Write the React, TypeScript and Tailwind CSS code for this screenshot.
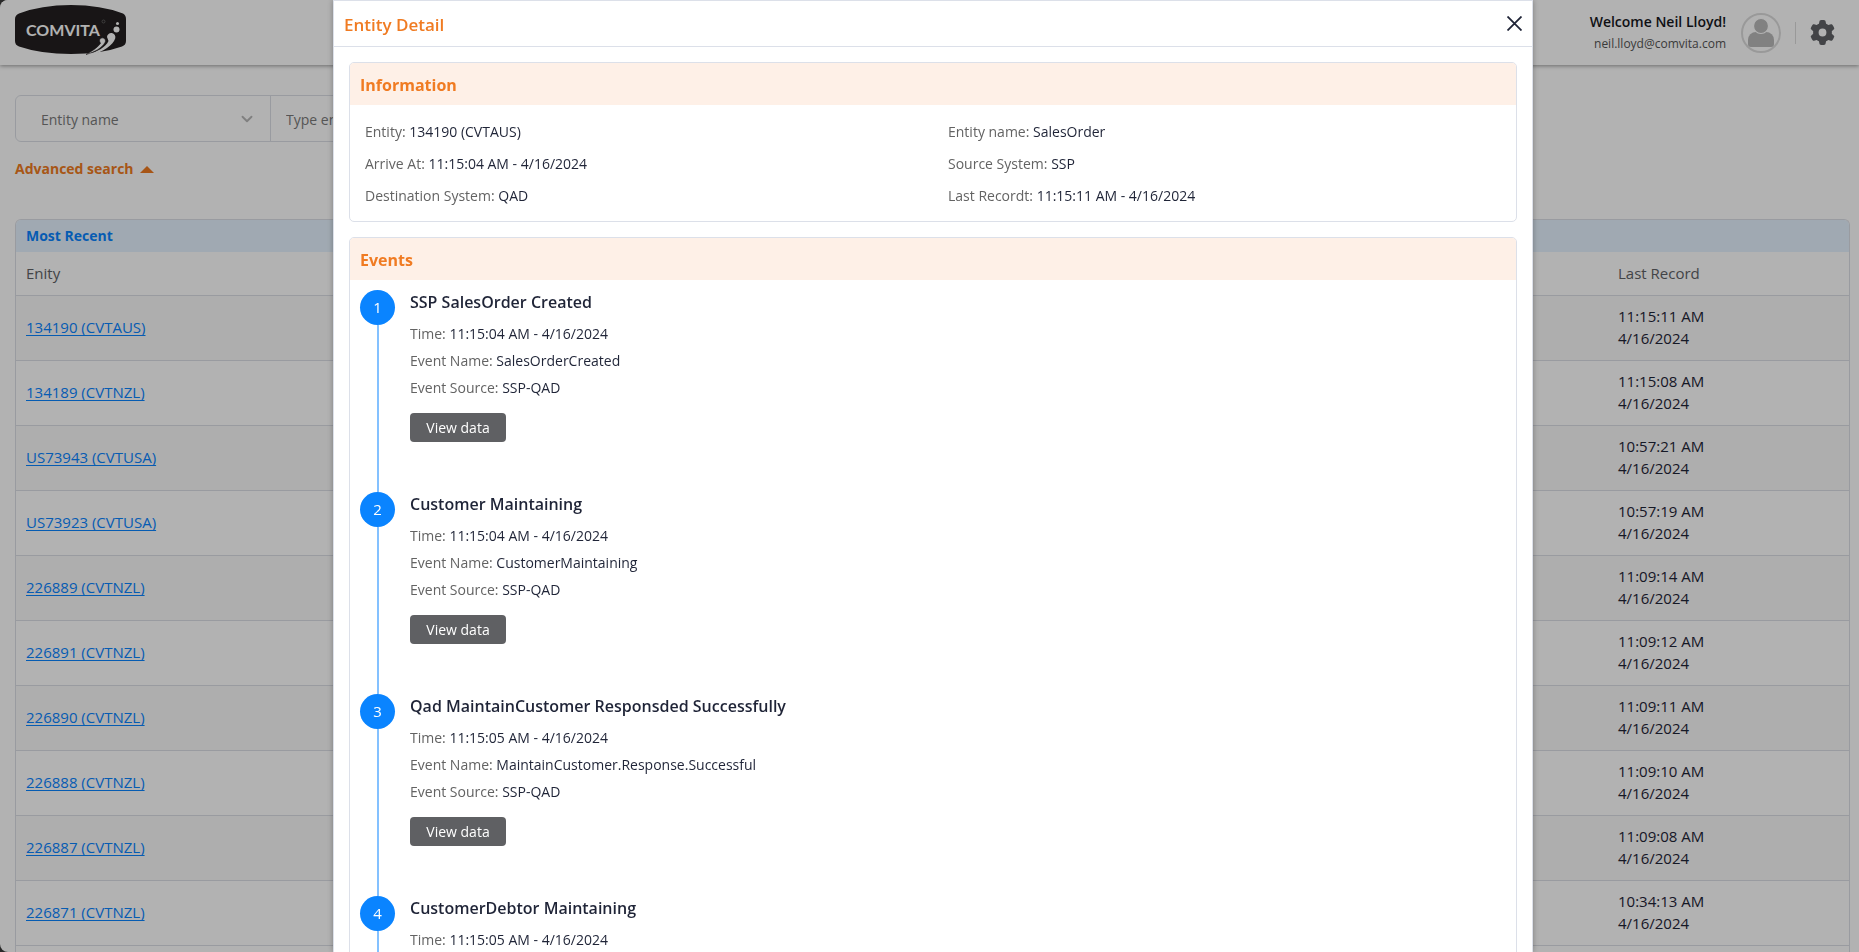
import type { ReactNode } from "react";
import { ChevronDown } from "lucide-react";
import { FaGear } from "react-icons/fa6";

const records = [
  { entity: "134190 (CVTAUS)", time: "11:15:11 AM" },
  { entity: "134189 (CVTNZL)", time: "11:15:08 AM" },
  { entity: "US73943 (CVTUSA)", time: "10:57:21 AM" },
  { entity: "US73923 (CVTUSA)", time: "10:57:19 AM" },
  { entity: "226889 (CVTNZL)", time: "11:09:14 AM" },
  { entity: "226891 (CVTNZL)", time: "11:09:12 AM" },
  { entity: "226890 (CVTNZL)", time: "11:09:11 AM" },
  { entity: "226888 (CVTNZL)", time: "11:09:10 AM" },
  { entity: "226887 (CVTNZL)", time: "11:09:08 AM" },
  { entity: "226871 (CVTNZL)", time: "10:34:13 AM" },
];

const information = [
  { label: "Entity", value: "134190 (CVTAUS)" },
  { label: "Entity name", value: "SalesOrder" },
  { label: "Arrive At", value: "11:15:04 AM - 4/16/2024" },
  { label: "Source System", value: "SSP" },
  { label: "Destination System", value: "QAD" },
  { label: "Last Recordt", value: "11:15:11 AM - 4/16/2024" },
];

const events = [
  {
    title: "SSP SalesOrder Created",
    time: "11:15:04 AM - 4/16/2024",
    name: "SalesOrderCreated",
    source: "SSP-QAD",
  },
  {
    title: "Customer Maintaining",
    time: "11:15:04 AM - 4/16/2024",
    name: "CustomerMaintaining",
    source: "SSP-QAD",
  },
  {
    title: "Qad MaintainCustomer Responsded Successfully",
    time: "11:15:05 AM - 4/16/2024",
    name: "MaintainCustomer.Response.Successful",
    source: "SSP-QAD",
  },
  {
    title: "CustomerDebtor Maintaining",
    time: "11:15:05 AM - 4/16/2024",
    name: "CustomerDebtorMaintaining",
    source: "SSP-QAD",
  },
];

function Logo() {
  return (
    <svg viewBox="0 0 112 50" className="h-[50px] w-[112px]" role="img" aria-label="Comvita">
      <path
        d="M0 14Q0 10 4 8.500Q26 0 56 0T108 8.500Q111 10 111 14V36Q111 40 107 41.500Q86 49 56 49T4 41.500Q0 40 0 36Z"
        fill="#231f20"
      />
      <text
        x="11"
        y="31"
        fill="#fff"
        fontFamily="Lato, sans-serif"
        fontSize="16"
        fontWeight="700"
      >
        COMVITA
      </text>
      <circle cx="88.500" cy="16.500" r="1.500" fill="none" stroke="#777" strokeWidth="0.600" />
      <circle cx="102.500" cy="18.500" r="1.500" fill="#fff" />
      <circle cx="101.500" cy="24.500" r="3" fill="#fff" />
      <path
        d="M92 32a4.200 4.200 0 1 1 8.200 1.500C98 40 88 47 78 49.500L71 50C82 47 91 42 93.500 36Z"
        fill="#fff"
      />
      <path
        d="M84.500 36a3 3 0 1 1 5.500 1.500C87 43 80 47 71 49.500C77 46 82 43 85.500 38.500Z"
        fill="#fff"
        stroke="#231f20"
        strokeWidth="0.600"
      />
    </svg>
  );
}

function Avatar() {
  return (
    <svg viewBox="0 0 40 40" className="size-10" aria-hidden="true">
      <circle cx="20" cy="20" r="19" fill="none" stroke="#dcdcdc" strokeWidth="2" />
      <path d="M7 31v-4a8 8 0 0 1 8-8h10a8 8 0 0 1 8 8v4a3 3 0 0 1-3 3H10a3 3 0 0 1-3-3Z" fill="#b9b9b9" />
      <circle cx="20" cy="13" r="7.500" fill="#b9b9b9" stroke="#fff" strokeWidth="1.200" />
    </svg>
  );
}

function Header() {
  return (
    <header className="flex h-[65px] shrink-0 items-center justify-between bg-white pr-6 pl-[15px] shadow-[0_1px_4px_rgba(0,0,0,0.4)]">
      <a href="#" className="mb-[6px]">
        <Logo />
      </a>
      <div className="flex items-center">
        <div className="text-right">
          <p className="text-sm leading-[22px] font-semibold text-[#16181d]">Welcome Neil Lloyd!</p>
          <p className="text-xs leading-[22px] text-[#555]">neil.lloyd@comvita.com</p>
        </div>
        <span className="ml-[15px]">
          <Avatar />
        </span>
        <span className="mx-[14px] h-[22px] w-px bg-[#dcdcdc]" />
        <button type="button" aria-label="Settings" className="text-[#606266]">
          <FaGear className="size-[25px]" />
        </button>
      </div>
    </header>
  );
}

function SearchBar() {
  return (
    <div>
      <div className="flex h-[47px] w-[900px] max-w-full rounded-md border border-[#dcdfe6]">
        <div className="grid w-[255px] grid-cols-1 items-center border-r border-[#dcdfe6]">
          <select
            aria-label="Search field"
            className="col-start-1 row-start-1 h-full appearance-none bg-transparent pt-[2px] pl-[25px] text-sm text-[#7a7a7a] outline-none"
          >
            <option>Entity name</option>
          </select>
          <ChevronDown
            className="pointer-events-none col-start-1 row-start-1 mr-[14px] size-[18px] justify-self-end text-[#b8b8b8]"
            strokeWidth={2.5}
          />
        </div>
        <input
          type="text"
          aria-label="Search value"
          placeholder="Type entity name"
          className="flex-1 bg-transparent px-[15px] pt-[2px] text-sm outline-none placeholder:text-[#7a7a7a]"
        />
      </div>
      <button type="button" className="mt-[15px] flex items-center gap-[6px] text-sm leading-6 font-bold text-[#f07b22]">
        Advanced search
        <svg viewBox="0 0 14 7" className="h-[7px] w-[14px]" aria-hidden="true">
          <path d="M7 0 14 7H0Z" fill="currentColor" />
        </svg>
      </button>
    </div>
  );
}

function RecordTable() {
  return (
    <section className="mt-[38px] flex-1 overflow-hidden rounded-t-md border border-b-0 border-[#dcdfe6]">
      <h2 className="bg-[#e6f3ff] px-[10px] text-sm leading-8 font-bold text-[#0a84ff]">Most Recent</h2>
      <table className="w-full table-fixed text-left text-[15px]">
        <thead>
          <tr className="h-[43px] border-b border-[#dcdfe6] text-[#606266]">
            <th className="px-[10px] font-medium">Enity</th>
            <th className="w-[242px] px-[11px] font-medium">Last Record</th>
          </tr>
        </thead>
        <tbody>
          {records.map((record) => (
            <tr key={record.entity} className="h-[65px] border-b border-[#dcdfe6] odd:bg-[#f9f9f9]">
              <td className="px-[10px]">
                <a href="#" className="font-medium text-[#0a84ff] underline underline-offset-2">
                  {record.entity}
                </a>
              </td>
              <td className="px-[11px] pb-[2px] leading-[22px] text-[#1f2437]">
                {record.time}
                <br />
                4/16/2024
              </td>
            </tr>
          ))}
        </tbody>
      </table>
    </section>
  );
}

function Field({ label, value }: { label: string; value: string }) {
  return (
    <p className="text-[#636363]">
      {label}: <span className="text-[#1f2437]">{value}</span>
    </p>
  );
}

function Card({ title, children }: { title: string; children: ReactNode }) {
  return (
    <section className="overflow-hidden rounded-[5px] border border-[#dce0e9]">
      <h3 className="bg-[#fef0e7] px-[10px] pt-[2px] text-base leading-10 font-bold text-[#f07b22]">{title}</h3>
      {children}
    </section>
  );
}

function EntityDetail() {
  return (
    <div
      role="dialog"
      aria-labelledby="entity-detail-title"
      className="flex h-full w-full max-w-[1200px] flex-col border border-b-0 border-[#dce0e9] bg-white shadow-[0_0_6px_rgba(0,0,0,0.3)]"
    >
      <div className="flex h-[46px] shrink-0 items-center justify-between border-b border-[#dce0e9] px-[10px]">
        <h2 id="entity-detail-title" className="pt-[2px] text-[17px] font-semibold text-[#f07b22]">
          Entity Detail
        </h2>
        <button type="button" aria-label="Close">
          <svg viewBox="0 0 15 15" className="size-[15px]" stroke="#1f2437" strokeWidth="1.800">
            <path d="M.5.5l14 14M14.500.5l-14 14" />
          </svg>
        </button>
      </div>
      <div className="flex flex-1 flex-col gap-[15px] overflow-y-auto p-[15px] text-sm [scrollbar-width:none] *:shrink-0">
        <Card title="Information">
          <div className="grid grid-cols-2 pt-[11px] pb-[9px]">
            {information.map((item) => (
              <div key={item.label} className="px-[15px] leading-8">
                <Field label={item.label} value={item.value} />
              </div>
            ))}
          </div>
        </Card>
        <Card title="Events">
          <ol className="px-[10px] pt-[10px]">
            {events.map((event, index) => (
              <li key={event.title} className="flex gap-[15px]">
                <div className="flex flex-col items-center">
                  <span className="flex size-[35px] items-center justify-center rounded-full bg-[#0a84ff] pt-px text-[15px] text-white">
                    {index + 1}
                  </span>
                  <span className="w-[2px] flex-1 bg-[#84c1ff]" />
                </div>
                <div className="pb-[50px]">
                  <h4 className="mb-[6px] text-base leading-6 font-semibold text-[#1f2437]">{event.title}</h4>
                  <div className="leading-[27px]">
                    <Field label="Time" value={event.time} />
                    <Field label="Event Name" value={event.name} />
                    <Field label="Event Source" value={event.source} />
                  </div>
                  <button
                    type="button"
                    className="mt-3 flex h-[29px] w-[96px] items-center justify-center rounded bg-[#5f6063] font-medium text-white"
                  >
                    View data
                  </button>
                </div>
              </li>
            ))}
          </ol>
        </Card>
      </div>
    </div>
  );
}

export default function App() {
  return (
    <div className="h-screen overflow-hidden bg-[#3c3c3c] font-['Open_Sans',sans-serif]">
      <div className="flex h-full flex-col overflow-hidden rounded-l-lg bg-white">
        <Header />
        <main className="flex flex-1 flex-col pt-[30px] pr-[9px] pl-[15px]">
          <SearchBar />
          <RecordTable />
        </main>
      </div>
      <div className="fixed inset-0 flex justify-center bg-black/30 pl-[7px]">
        <EntityDetail />
      </div>
    </div>
  );
}
